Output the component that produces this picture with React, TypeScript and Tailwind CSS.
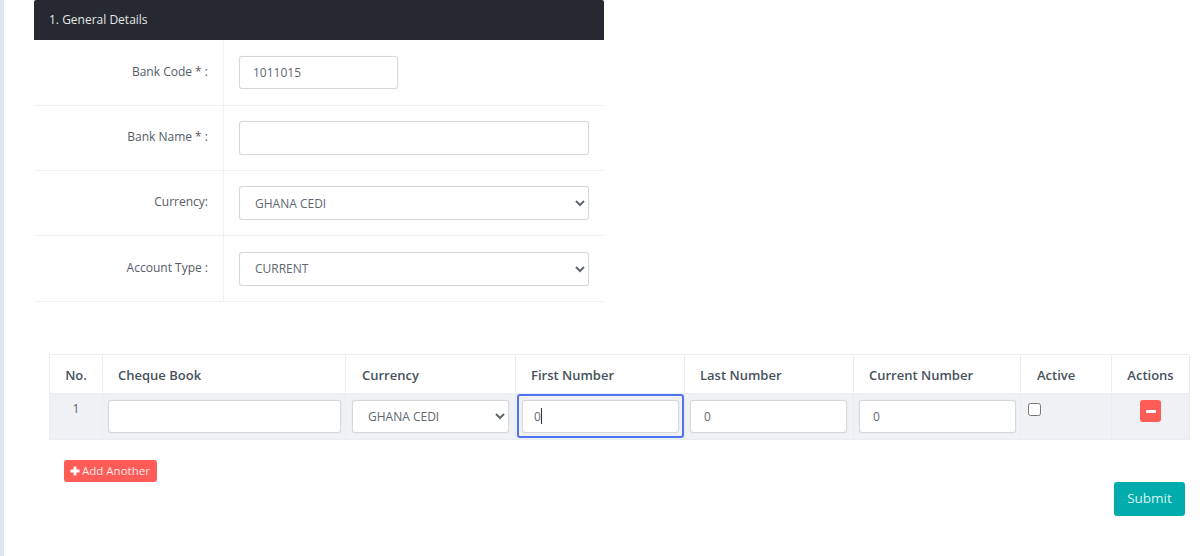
import React from "react";

const font = { fontFamily: '"Open Sans", "Noto Sans", sans-serif' };

const inputBase =
  "block h-[33px] w-full rounded-[3px] border border-[#d5d9de] bg-white text-[12px] text-[#5f6770] shadow-[0_0_1px_rgba(0,0,0,0.12)] outline-none";
const inputCls = `${inputBase} pl-[13px]`;
const selectBase =
  "block w-full rounded-[3px] border border-[#d5d9de] bg-white pl-[11px] pr-[4px] text-[12px] text-[#5f6770] shadow-[0_0_1px_rgba(0,0,0,0.12)] outline-none";

function FormRow({ label, children, h }: { label: string; children: React.ReactNode; h: string }) {
  return (
    <div className={`flex border-b border-[#eef0f3] ${h}`}>
      <div className="flex w-[190px] shrink-0 items-center justify-end border-r border-[#eef0f3] pr-[15px] pb-[2px] text-[12px] text-[#545c66]">
        {label}
      </div>
      <div className="flex flex-1 items-center pl-[15px] pr-[15px]">{children}</div>
    </div>
  );
}

const th = "border border-[#e9ecf0] pt-[3px] align-middle text-[13px] font-semibold text-[#48525e]";
const thLeft = `${th} pl-[15px] text-left`;
const thLeftWide = `${th} pl-[16px] text-left`;
const td = "border border-[#e9ecf0] align-top";

export default function App() {
  return (
    <div className="flex h-[556px] w-[1200px] overflow-hidden bg-white" style={font}>
      <div className="h-full w-1 shrink-0 bg-[#dfe5ee]" />
      <div className="flex-1 pl-[30px]">
        <section className="w-[570px]">
          <div className="flex h-10 items-center rounded-t-[2px] bg-[#262a30] pl-[15px] text-[12px] font-normal text-[#e3e6e9]">
            1. General Details
          </div>
          <FormRow label="Bank Code * :" h="h-[66px]">
            <input readOnly value="1011015" className={`${inputCls} !w-[159px]`} />
          </FormRow>
          <FormRow label="Bank Name * :" h="h-[65px]">
            <input readOnly value="" className={`${inputCls} !h-[34px]`} />
          </FormRow>
          <FormRow label="Currency:" h="h-[65px]">
            <select className={`${selectBase} h-[34px]`} defaultValue="GHANA CEDI">
              <option>GHANA CEDI</option>
            </select>
          </FormRow>
          <FormRow label="Account Type :" h="h-[66px]">
            <select className={`${selectBase} h-[34px]`} defaultValue="CURRENT">
              <option>CURRENT</option>
            </select>
          </FormRow>
        </section>

        <table className="mt-[52px] ml-[15px] w-[1140px] table-fixed border-collapse">
          <colgroup>
            <col className="w-[53px]" />
            <col className="w-[243px]" />
            <col className="w-[170px]" />
            <col className="w-[169px]" />
            <col className="w-[169px]" />
            <col className="w-[167px]" />
            <col className="w-[91px]" />
            <col className="w-[78px]" />
          </colgroup>
          <thead>
            <tr className="h-[39px]">
              <th className={`${th} text-center`}>No.</th>
              <th className={thLeft}>Cheque Book</th>
              <th className={thLeftWide}>Currency</th>
              <th className={thLeft}>First Number</th>
              <th className={thLeft}>Last Number</th>
              <th className={thLeft}>Current Number</th>
              <th className={thLeftWide}>Active</th>
              <th className={`${th} text-center`}>Actions</th>
            </tr>
          </thead>
          <tbody>
            <tr className="h-[46px] bg-[#eff1f4]">
              <td className={`${td} pt-[6px] text-center text-[12px] text-[#5a626c]`}>1</td>
              <td className={`${td} pt-[6px] pl-[5px] pr-[4px]`}>
                <input readOnly value="" className={inputCls} />
              </td>
              <td className={`${td} pt-[6px] pl-[6px] pr-[6px]`}>
                <select className={`${selectBase} h-[33px]`} defaultValue="GHANA CEDI">
                  <option>GHANA CEDI</option>
                </select>
              </td>
              <td className={`${td} p-0 pl-px`}>
                <div className="relative h-[44px] w-[167px] rounded-[3px] border-2 border-[#4f74ee] pt-[4px] pl-[3px] pr-[3px]">
                  <input readOnly value="0" className={`${inputBase} pl-[11px]`} />
                  <span className="absolute left-[22px] top-[12px] h-[16px] w-px bg-[#333]" />
                </div>
              </td>
              <td className={`${td} pt-[6px] pl-[5px] pr-[6px]`}>
                <input readOnly value="0" className={inputCls} />
              </td>
              <td className={`${td} pt-[6px] pl-[5px] pr-[4px]`}>
                <input readOnly value="0" className={inputCls} />
              </td>
              <td className={`${td} pl-[7px] pt-[9px]`}>
                <input type="checkbox" className="block h-[13px] w-[13px]" />
              </td>
              <td className={`${td} pt-[6px]`}>
                <button className="mx-auto flex h-[22px] w-[21px] items-center justify-center rounded-[3px] bg-[#ff5b57]">
                  <span className="h-[3px] w-[10px] rounded-[1px] bg-white" />
                </button>
              </td>
            </tr>
          </tbody>
        </table>

        <button className="mt-[20px] ml-[30px] flex h-[22px] w-[93px] items-center gap-[2px] rounded-[3px] bg-[#ff5b57] pl-[6px] text-[11.5px] text-[#ffe9e8]">
          <svg width="10" height="10" viewBox="0 0 10 10" className="shrink-0">
            <path d="M3.6 0.5h2.8v3.1h3.1v2.8h-3.1v3.1h-2.8v-3.1h-3.1v-2.8h3.1z" fill="#fff" />
          </svg>
          Add Another
        </button>
        <div className="flex justify-end pr-[15px]">
          <button className="h-[34px] w-[71px] rounded-[3px] bg-[#00acac] pb-[2px] text-[13.5px] text-[#d9f3f3]">Submit</button>
        </div>
      </div>
    </div>
  );
}
